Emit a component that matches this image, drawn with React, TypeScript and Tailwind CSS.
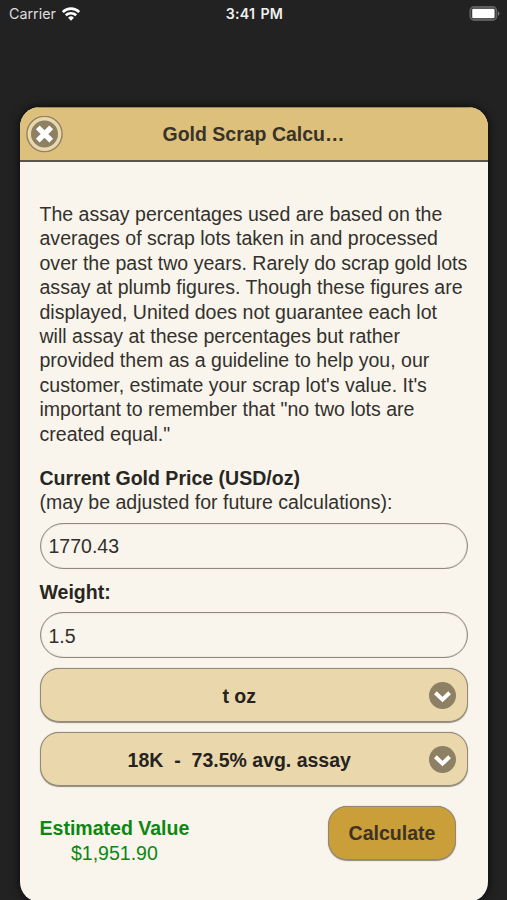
import React from "react";

const notice = [
  "The assay percentages used are based on the",
  "averages of scrap lots taken in and processed",
  "over the past two years. Rarely do scrap gold lots",
  "assay at plumb figures. Though these figures are",
  "displayed, United does not guarantee each lot",
  "will assay at these percentages but rather",
  "provided them as a guideline to help you, our",
  "customer, estimate your scrap lot's value. It's",
  "important to remember that \"no two lots are",
  "created equal.\"",
];

function Wifi() {
  return (
    <svg className="mb-px ml-[6px] h-[14px] w-[18px]" viewBox="0 0 18 14" fill="none" stroke="#fff" strokeWidth="2.6">
      <path d="M0.8 5C5.4.5 12.6.5 17.2 5" />
      <path d="M3.8 8.3C6.7 5.5 11.3 5.5 14.2 8.3" />
      <path d="M6.1 10.7Q9 8 11.9 10.7L9 13.7Z" fill="#fff" stroke="none" />
    </svg>
  );
}

function StatusBar() {
  return (
    <header className="grid h-7 grid-cols-3 items-center pr-[7px] pl-[9px] font-['Inter','Liberation_Sans',sans-serif] text-[#dedede]">
      <div className="flex items-center">
        <span className="text-[14.3px]">Carrier</span>
        <Wifi />
      </div>
      <div className="text-center text-[14.2px] font-semibold tracking-[0.2px] whitespace-nowrap text-[#f0f0f0] [word-spacing:1.5px]">3:41 PM</div>
      <svg className="mb-[2px] h-[15px] w-[31px] justify-self-end" viewBox="0 0 31 15">
        <rect x="1.4" y="1" width="26" height="13" rx="3.6" fill="#222" stroke="#5e5e5e" strokeWidth="1.9" />
        <rect x="3.2" y="2.8" width="22.4" height="9.4" rx="1.3" fill="#fff" />
        <path d="M29 5.2Q32 7.6 29 10Z" fill="#77777b" />
      </svg>
    </header>
  );
}

function Field({ value }: { value: string }) {
  return (
    <input
      className="block h-[46px] w-full rounded-[23px] border border-[#8f897e] bg-[#f9f5ec] px-2 pt-[2px] text-[19.5px] text-[#302f2c] shadow-[inset_0_0_1px_#8f897e] outline-none"
      defaultValue={value}
    />
  );
}

function Select({ label }: { label: string }) {
  return (
    <button className="flex h-[54px] w-full items-center rounded-[19px] border border-[#918979] bg-[#ead8ac] pr-[11px] pl-[38px] text-[19.5px] font-bold text-[#252321] shadow-[0_0.5px_1px_#918979]">
      <span className="flex-1 pt-px pr-[29px] text-center whitespace-pre">{label}</span>
      <svg className="size-[27px] shrink-0" viewBox="0 0 27 27">
        <circle cx="13.5" cy="13.5" r="13.5" fill="#8e8063" />
        <path d="M6.4 10.8L13.5 17.6L20.6 10.8" fill="none" stroke="#fff" strokeWidth="4" />
      </svg>
    </button>
  );
}

export default function App() {
  return (
    <div className="h-[900px] w-[507px] overflow-hidden bg-[#222] font-['Liberation_Sans',Arial,sans-serif] text-[19.55px] leading-[24.4px] text-[#33312d]">
      <StatusBar />
      <main className="mt-[79px] mr-[19px] ml-5 h-[795px] overflow-hidden rounded-[20px] bg-[#f9f5ec] shadow-[0_0_10px_#000c]">
        <div className="flex h-[55px] items-center border-t border-b-2 border-t-[#9c8a5f] border-b-[#5b564d] bg-[#ddc07c] pl-[6px]">
          <button aria-label="Close" className="size-[37px] shrink-0">
            <svg viewBox="0 0 37 37" className="size-[37px]">
              <circle cx="18.5" cy="18" r="17.6" fill="#ead8ac" stroke="#8f8268" strokeWidth="1.4" />
              <circle cx="18.5" cy="18" r="13.5" fill="#8e8063" />
              <path d="M11.8 11.3L25.2 24.7M25.2 11.3L11.8 24.7" stroke="#fff" strokeWidth="5.4" />
            </svg>
          </button>
          <h1 className="flex-1 pr-[44px] text-center text-[19.5px] font-bold whitespace-nowrap text-[#383329]">Gold Scrap Calcu…</h1>
        </div>
        <div className="pt-[40px] pr-5 pl-[19.5px]">
          <p>
            {notice.map((line) => (
              <span key={line} className="block whitespace-nowrap">{line}</span>
            ))}
          </p>
          <div className="mt-[20px]">
            <strong className="block text-[#282622]">Current Gold Price (USD/oz)</strong>
            <span className="block">(may be adjusted for future calculations):</span>
          </div>
          <div className="mt-[8px]"><Field value="1770.43" /></div>
          <strong className="mt-[11px] block text-[#282622]">Weight:</strong>
          <div className="mt-[8px] mb-[10px]"><Field value="1.5" /></div>
          <Select label="t oz" />
          <div className="mt-[10px]"><Select label={"18K  -  73.5% avg. assay"} /></div>
          <div className="mt-[20px] flex items-start justify-between pr-3">
            <div className="mt-[10px] text-center text-[#0b8712]">
              <strong className="block">Estimated Value</strong>
              <span className="block">$1,951.90</span>
            </div>
            <button className="h-[54px] w-[128px] rounded-[19px] border border-[#918672] bg-[#ca9e38] font-bold text-[#3c3324] shadow-[0_0.5px_1px_#918979]">
              Calculate
            </button>
          </div>
        </div>
      </main>
    </div>
  );
}
